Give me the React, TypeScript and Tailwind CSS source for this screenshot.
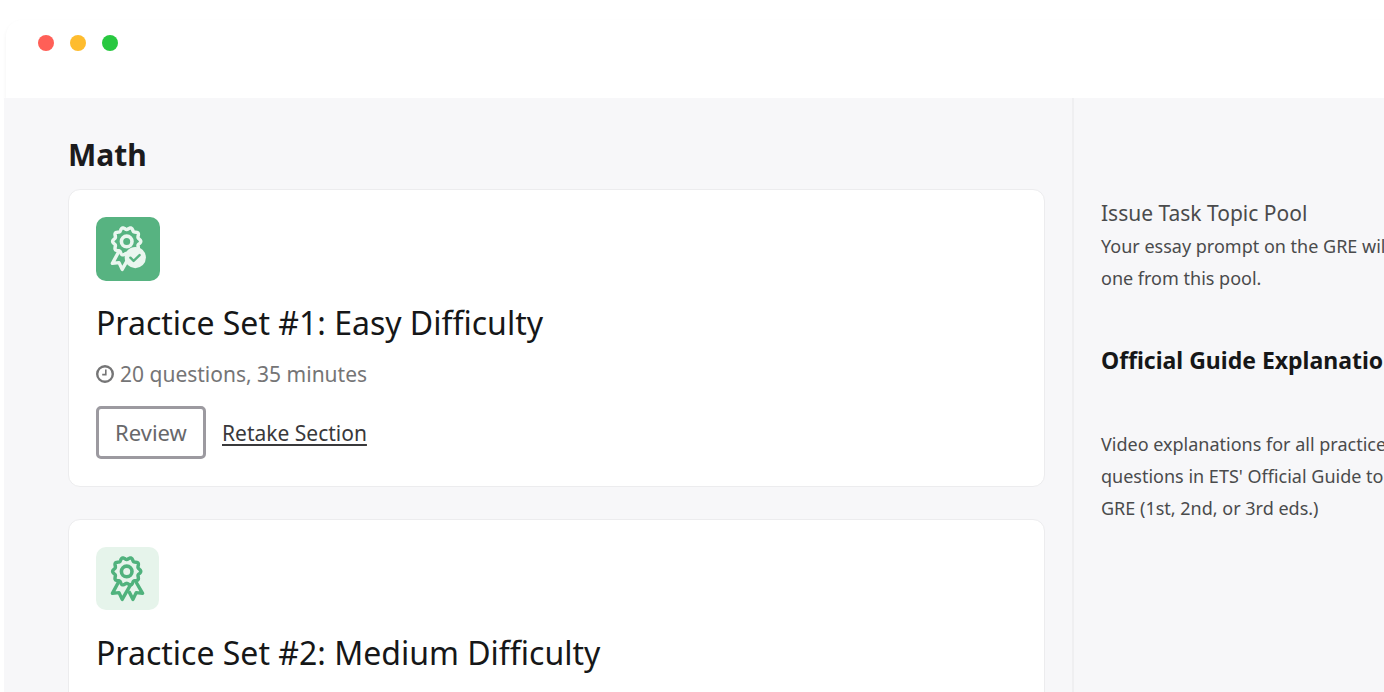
import clsx from 'clsx';

interface PracticeSet {
  id: number;
  title: string;
  details?: string;
  completed: boolean;
}

const practiceSets: PracticeSet[] = [
  { id: 1, title: 'Practice Set #1: Easy Difficulty', details: '20 questions, 35 minutes', completed: true },
  { id: 2, title: 'Practice Set #2: Medium Difficulty', completed: false },
];

// Wavy outline of the rosette, ten bumps around the centre
const rosette = Array.from({ length: 120 }, (_, i) => {
  const angle = (i / 120) * Math.PI * 2;
  const radius = 13 + 1.1 * Math.cos(angle * 10);
  const x = 30.7 + radius * Math.cos(angle);
  const y = 24.4 + radius * Math.sin(angle);
  return `${x.toFixed(2)},${y.toFixed(2)}`;
}).join(' ');

function AwardIcon({ completed }: { completed: boolean }) {
  return (
    <div className="h-16">
      <div
        className={clsx(
          'rounded-[10px]',
          completed ? 'size-16 bg-[#57b381] text-[#eaf6ef]' : 'size-[63px] bg-[#e6f4eb] text-[#50b27d]'
        )}
      >
        <svg
          viewBox="0 0 64 64"
          className="size-16"
          fill="none"
          stroke="currentColor"
          strokeWidth="3.4"
          strokeLinecap="round"
          strokeLinejoin="round"
          aria-hidden="true"
        >
          <polygon points={rosette} />
          <circle cx="30.7" cy="24.4" r="5.3" strokeWidth="3.6" />
          <path d="M22 36 16.4 46.4l6.6-.8 3.2 6.8 8.3-14.5" />
          {completed ? (
            <>
              <circle cx="39.3" cy="40.6" r="10.6" fill="currentColor" stroke="none" />
              <path d="m34.4 40.7 3.2 3.2 6-5.8" stroke="#57b381" strokeWidth="2.4" />
            </>
          ) : (
            <path d="M40.6 36 46.6 46.4l-6.4-.8L37 52.4l-3.6-7" />
          )}
        </svg>
      </div>
    </div>
  );
}

function ClockIcon() {
  return (
    <svg viewBox="0 0 18 18" className="size-[18px]" fill="none" stroke="currentColor" aria-hidden="true">
      <circle cx="9" cy="9" r="7.8" strokeWidth="2.4" />
      <path d="M9.8 4.6v5H6.2" strokeWidth="1.6" />
    </svg>
  );
}

function PracticeCard({ set }: { set: PracticeSet }) {
  return (
    <article className="min-h-[298px] rounded-xl border border-[#ececee] bg-white px-[27px] pt-[27px] pb-[27px]">
      <AwardIcon completed={set.completed} />
      <h3 className="mt-[22px] text-[32px] leading-10 text-[#161718]">{set.title}</h3>
      {set.details && (
        <p className="mt-[15px] flex items-center gap-[6px] text-[21px] leading-8 text-[#757576]">
          <ClockIcon />
          {set.details}
        </p>
      )}
      {set.completed && (
        <div className="mt-4 flex items-center gap-4">
          <button
            type="button"
            className="h-[53px] w-[110px] rounded-[5px] border-[3px] border-[#9c9aa0] text-[22px] text-[#68686a]"
          >
            Review
          </button>
          <a href="#retake" className="text-[21px] leading-8 text-[#39393b] underline decoration-2 underline-offset-[3px]">
            Retake Section
          </a>
        </div>
      )}
    </article>
  );
}

function Sidebar() {
  return (
    <aside className="w-[312px] shrink-0 overflow-hidden border-l-2 border-[#efeff1] pl-[27px] text-[#4a4b4c]">
      {/* Column keeps its reading width and runs past the window edge */}
      <div className="w-[324px] pt-[99px]">
        <h3 className="text-[21px] leading-8">Issue Task Topic Pool</h3>
        <p className="mt-px text-lg leading-8">Your essay prompt on the GRE will be one from this pool.</p>
        <h2 className="mt-[50px] text-[23px] leading-8 font-bold whitespace-nowrap text-[#161718]">
          Official Guide Explanations
        </h2>
        <p className="mt-[52px] text-lg leading-8">
          Video explanations for all practice questions in ETS' Official Guide to the GRE (1st, 2nd, or 3rd eds.)
        </p>
      </div>
    </aside>
  );
}

export default function App() {
  return (
    <div className="flex h-screen flex-col overflow-hidden bg-white font-['Noto_Sans',sans-serif]">
      {/* Window bar */}
      <header className="mt-5 ml-[6px] flex h-[78px] shrink-0 items-start gap-4 rounded-tl-2xl bg-white px-8 pt-[15px] shadow-[0_2px_4px_rgba(0,0,0,0.05)]">
        <span className="size-4 rounded-full bg-[#ff5f57]" />
        <span className="size-4 rounded-full bg-[#febc2e]" />
        <span className="size-4 rounded-full bg-[#28c840]" />
      </header>

      <div className="relative ml-1 flex min-h-0 flex-1 bg-[#f7f7f9]">
        <main className="min-w-0 flex-1 pt-[37px] pr-[27px] pl-16">
          <h2 className="text-[30px] leading-10 font-bold text-[#1b1b1d]">Math</h2>
          <div className="mt-[14px] flex flex-col gap-8">
            {practiceSets.map(set => (
              <PracticeCard key={set.id} set={set} />
            ))}
          </div>
        </main>
        <Sidebar />
      </div>
    </div>
  );
}
